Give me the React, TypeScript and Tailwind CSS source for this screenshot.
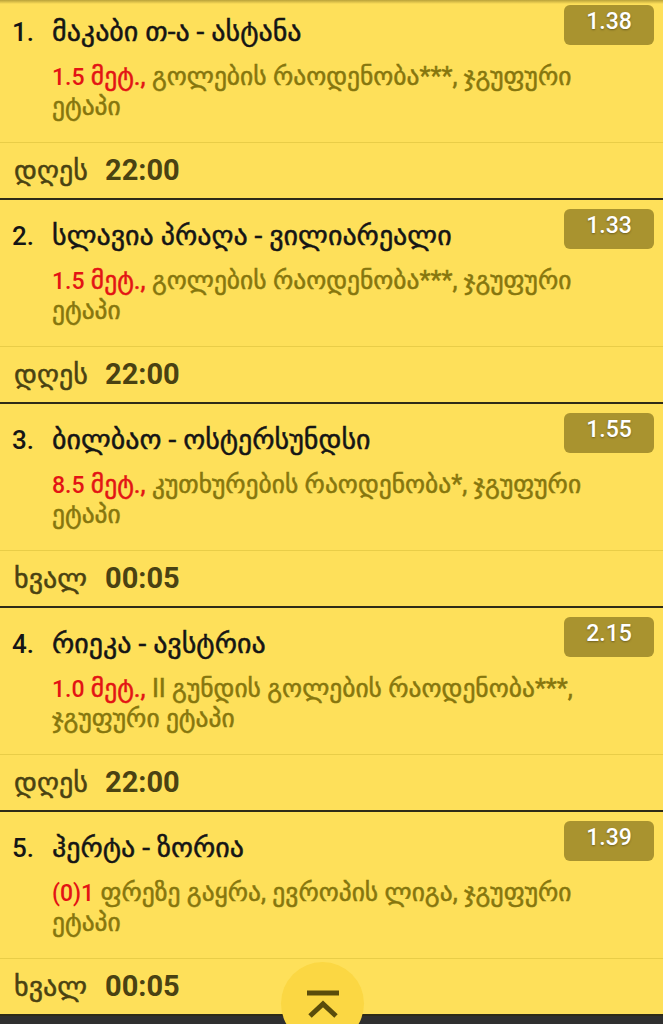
import React from 'react';

interface Match {
  n: number;
  title: string;
  odds: string;
  num: string;
  unit: string;
  line1: string;
  line2: string;
  day: string;
  time: string;
}

const matches: Match[] = [
  { n: 1, title: 'მაკაბი თ-ა - ასტანა', odds: '1.38', num: '1.5', unit: ' მეტ.,', line1: 'გოლების რაოდენობა***, ჯგუფური', line2: 'ეტაპი', day: 'დღეს', time: '22:00' },
  { n: 2, title: 'სლავია პრაღა - ვილიარეალი', odds: '1.33', num: '1.5', unit: ' მეტ.,', line1: 'გოლების რაოდენობა***, ჯგუფური', line2: 'ეტაპი', day: 'დღეს', time: '22:00' },
  { n: 3, title: 'ბილბაო - ოსტერსუნდსი', odds: '1.55', num: '8.5', unit: ' მეტ.,', line1: 'კუთხურების რაოდენობა*, ჯგუფური', line2: 'ეტაპი', day: 'ხვალ', time: '00:05' },
  { n: 4, title: 'რიეკა - ავსტრია', odds: '2.15', num: '1.0', unit: ' მეტ.,', line1: 'II გუნდის გოლების რაოდენობა***,', line2: 'ჯგუფური ეტაპი', day: 'დღეს', time: '22:00' },
  { n: 5, title: 'ჰერტა - ზორია', odds: '1.39', num: '(0)1', unit: '', line1: 'ფრეზე გაყრა, ევროპის ლიგა, ჯგუფური', line2: 'ეტაპი', day: 'ხვალ', time: '00:05' },
];

const MatchCard: React.FC<{ m: Match }> = ({ m }) => (
  <div className="border-b-2 border-[#2e2b17]">
    <div className="h-[147px] border-b border-[#e9cd48]">
      <div className="flex pl-3 pr-[9px]">
        <div className="w-10 shrink-0 pt-[18px] text-[26px] leading-[36px] font-medium text-[#151515]">{m.n}.</div>
        <div className="flex-1 min-w-0 pt-[18px] text-[28px] leading-[36px] text-[#151515] [-webkit-text-stroke:0.5px_#151515]">
          {m.title}
        </div>
        <div className="shrink-0 self-start mt-[9px] w-[90px] h-10 rounded-md bg-[#a9932f] text-center text-[23px] leading-[34px] font-medium text-white [text-shadow:0_1px_2px_rgba(0,0,0,0.35)]">
          {m.odds}
        </div>
      </div>
      <div className="mt-[12px] pl-[52px] whitespace-nowrap text-[25.5px] leading-[29px] text-[#86760e] [-webkit-text-stroke:0.5px_#86760e]">
        <div>
          <span className="text-[#e31414] [-webkit-text-stroke:0.5px_#e31414]">
            <span className="text-[23px] font-medium [-webkit-text-stroke:0]">{m.num}</span>
            {m.unit}
          </span>{' '}
          {m.line1}
        </div>
        <div>{m.line2}</div>
      </div>
    </div>
    <div className="h-[55px] flex items-center pl-[14px] text-[#4a4212]">
      <span className="text-[28px] w-[91px] [-webkit-text-stroke:0.5px_#4a4212]">{m.day}</span>
      <span className="text-[29px] font-bold">{m.time}</span>
    </div>
  </div>
);

export default function App() {
  return (
    <div className="relative h-[1024px] overflow-hidden bg-[#fee05a] font-['Roboto','DejaVu_Sans',sans-serif]">
      <div className="absolute inset-x-0 top-0 h-1 bg-gradient-to-b from-[#b9a23a] to-transparent" />
      <div className="-mt-1">
        {matches.map((m) => (
          <MatchCard key={m.n} m={m} />
        ))}
        <div className="h-10 bg-[#2f2f2f]" />
      </div>
      <button className="absolute left-[281px] top-[962px] w-[83px] h-[83px] rounded-full bg-[#fbd743] flex justify-center pt-[28px]">
        <svg width="36" height="28" viewBox="0 0 36 28" fill="none" stroke="#5a4c0b" strokeWidth="5">
          <line x1="2" y1="3" x2="34" y2="3" />
          <polyline points="5,26 18,14 31,26" />
        </svg>
      </button>
    </div>
  );
}
